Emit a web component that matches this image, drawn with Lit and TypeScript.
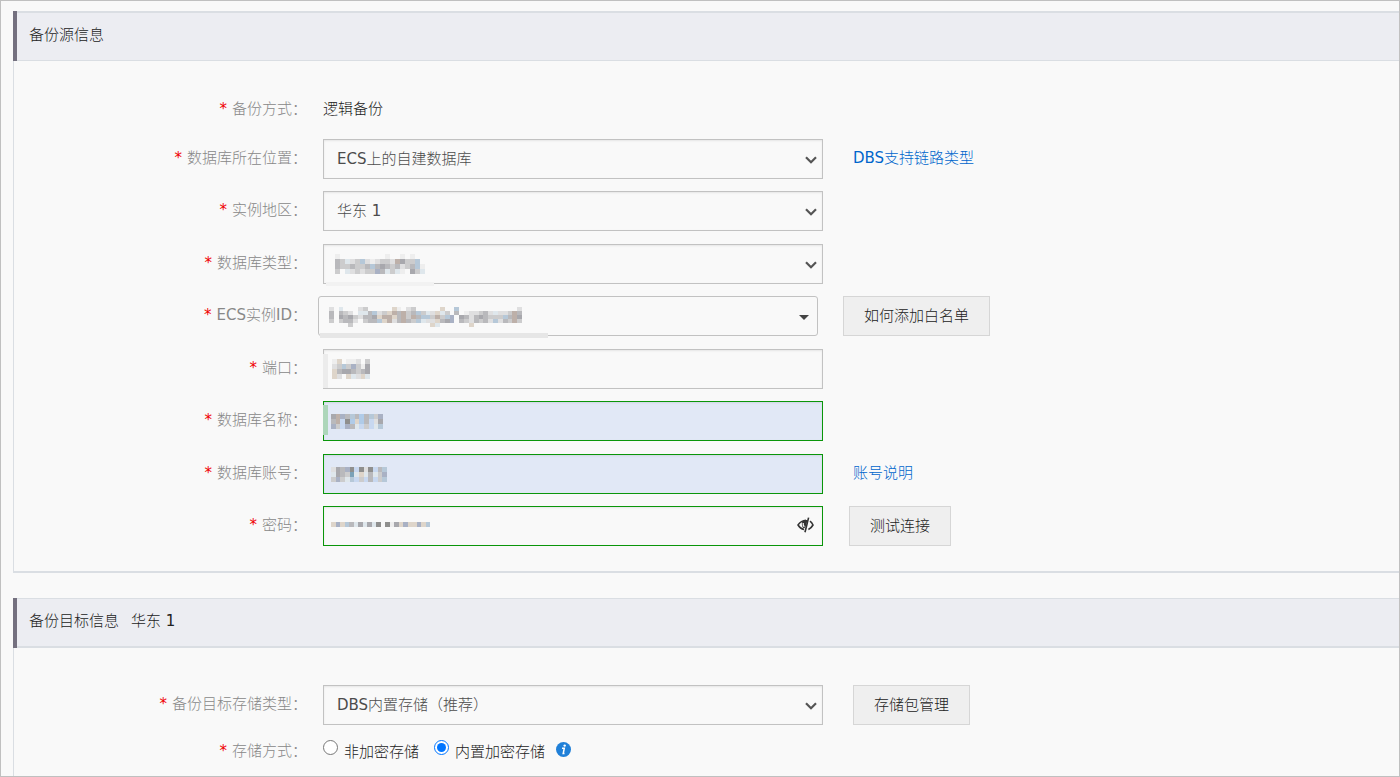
import { LitElement, html, svg, css, nothing } from "lit";
import { customElement, property } from "lit/decorators.js";

/* Colour key for the censored values: one letter per block, a dot for none. */
const PALETTE: Record<string, string> = {
  a: "#eeeeee",
  b: "#dfdfe0",
  c: "#cccccd",
  d: "#b9b9bc",
  e: "#a8a8ad",
  f: "#8f8f8e",
  g: "#dfe7ec",
  h: "#b6c8d8",
  i: "#ded5ca",
  j: "#bdb0a9",
  k: "#c8d8f0",
  l: "#a9b1c4",
  m: "#b0cbe8",
  n: "#7ba2b8",
};

interface Mask {
  rows: string[];
  width: number;
  height: number;
}

const MASKS: Record<string, Mask> = {
  engine: {
    width: 90,
    height: 20,
    rows: ["a.........a..a.a..", "dcgbchbabccbjecch.", "dccdccdhdedcdbcdha", "c.gbcbccldgcga.ecg"],
  },
  instance: {
    width: 193,
    height: 20,
    rows: [
      "b.g...bc.....ia.bc.....i..h............b",
      "d.dcb.ggdhbcijdjcdhcgbigc.d.abbcdbgbbcjd",
      "d.edecbddeijjidjcjdhhcjchl.edbdedccchdje",
      "c.cddb.cddhijbdjdchgbbidel.dcbdcdbhbdcjc",
      "....c................ig......i..........",
    ],
  },
  port: { width: 38, height: 20, rows: ["ai.aab.c", "bchclcae", "ideedcde", "ib.igbig"] },
  dbname: { width: 52, height: 15, rows: ["ejldhdmdhcl", "djkfmimdkbe", "lckldgkckgh"] },
  account: { width: 56, height: 15, rows: ["bedlfkfbfkdh", "gedcngigdgcl", "clcghkckdkch"] },
  secret: { width: 99, height: 5, rows: ["ilihdgegegf.faeiliilih"] },
};

@customElement("masked-value")
export class MaskedValue extends LitElement {
  @property() name = "";

  static styles = css`
    :host {
      display: block;
      line-height: 0;
    }
    .blocks {
      display: block;
      shape-rendering: crispEdges;
    }
  `;

  render() {
    const mask = MASKS[this.name];
    if (!mask) return nothing;
    const columns = mask.rows[0].length;
    return html`<svg
      class="blocks"
      width=${mask.width}
      height=${mask.height}
      viewBox="0 0 ${columns} ${mask.rows.length}"
      preserveAspectRatio="none"
      aria-hidden="true"
    >
      ${mask.rows.map((row, y) =>
        [...row].map((key, x) =>
          key === "." ? nothing : svg`<rect x=${x} y=${y} width="1" height="1" fill=${PALETTE[key]}></rect>`
        )
      )}
    </svg>`;
  }
}

const chevron = html`<svg class="chevron" width="12" height="8" viewBox="0 0 12 8" aria-hidden="true">
  <path d="M1 1.2 6 6.2 11 1.2" fill="none" stroke="#555" stroke-width="2.2" />
</svg>`;

const caret = html`<svg class="chevron caret" width="10" height="5" viewBox="0 0 10 5" aria-hidden="true">
  <path d="M0 0H10L5 5Z" fill="#444" />
</svg>`;

const eye = html`<svg width="17" height="16" viewBox="0 0 17 16" aria-hidden="true">
  <path d="M7 12.600C4.400 12 2.300 10.200 1 8C3 5 5.400 3.400 9 3.200" fill="none" stroke="#333" stroke-width="1.500" />
  <path d="M5.400 4.400C7 3.300 9 3 10.600 3L9 8.500C8.400 10.500 7.600 11.200 7 11.200C5 10.400 4.200 7 5.400 4.400Z" fill="#333" />
  <path d="M6.200 6C5.900 8 6.500 9.200 7.400 9.800" fill="none" stroke="#f8f8f8" stroke-width="1.300" />
  <path d="M11.600 .6 8 15.200" stroke="#333" stroke-width="1.600" />
  <path d="M13 4.200C14.400 5.200 15.300 6.500 16 8C15 9.800 13.600 11.500 11.400 12.500" fill="none" stroke="#333" stroke-width="1.600" />
</svg>`;

const info = html`<svg class="info" width="15" height="15" viewBox="0 0 15 15" aria-hidden="true">
  <circle cx="7.5" cy="7.500" r="7.500" fill="#2080d8" />
  <circle cx="8.700" cy="3.600" r="1.200" fill="#fff" />
  <path d="M6 6.200H8.300L7.200 11.600H8.500" fill="none" stroke="#fff" stroke-width="1.500" />
</svg>`;

@customElement("app-root")
export class AppRoot extends LitElement {
  static styles = css`
    :host {
      display: flex;
      flex-direction: column;
      gap: 25px;
      box-sizing: border-box;
      min-height: 100vh;
      padding: 10px 0 0 12px;
      border: 1px solid #c0c0c0;
      background: #f9f9f9;
      color: #222;
      font-family: "DejaVu Sans", "Noto Sans CJK SC Light", "Noto Sans CJK SC", sans-serif;
      font-size: 15px;
      font-weight: 400;
      line-height: 20px;
    }
    * {
      box-sizing: border-box;
    }
    .panel {
      display: flex;
      flex-direction: column;
    }
    .panel-last {
      flex: 1;
    }
    .bar {
      border-left: 4px solid #74707f;
    }
    .head {
      display: flex;
      gap: 12px;
      height: 50px;
      margin: 0;
      padding: 12px 12px 0;
      border: solid #dadee3;
      border-width: 2px 0 1px;
      background: #ecedf2;
      font-size: 15px;
      font-weight: 400;
    }
    .panel-last .head {
      border-width: 1px 0 2px;
    }
    .body {
      padding: 38px 0 25px;
      border-left: 1px solid #dadee3;
      border-bottom: 2px solid #dadee3;
    }
    .panel-last .body {
      flex: 1;
      padding: 37px 0 12px;
      border-bottom: 0;
    }
    .row {
      display: grid;
      grid-template-columns: 293px 500px auto;
      justify-content: start;
      align-items: start;
      column-gap: 16px;
      min-height: 40px;
      margin-bottom: 12px;
    }
    .row:nth-child(odd) {
      margin-bottom: 13px;
    }
    .row.plain {
      min-height: 20px;
      margin-bottom: 20px;
    }
    .row:last-child,
    .row.plain:last-child {
      margin-bottom: 0;
    }
    .row.plain .label {
      padding-top: 0;
    }
    .row.plain:last-child .label {
      padding-top: 3px;
    }
    .row.combo {
      column-gap: 11px;
    }
    .label {
      padding-top: 9px;
      color: #888;
      text-align: right;
      white-space: nowrap;
    }
    .star {
      margin-right: 5px;
      color: #f00000;
    }
    .field {
      position: relative;
      height: 40px;
    }
    .control {
      display: block;
      width: 100%;
      height: 40px;
      margin: 0;
      padding: 0 13px;
      border: 1px solid #c2c2c2;
      border-radius: 0;
      outline: 0;
      appearance: none;
      background: #f9f9f9;
      box-shadow: inset 0 1px 2px rgba(0, 0, 0, 0.08);
      color: #4c4c4c;
      font: inherit;
    }
    .combo .control {
      border-radius: 3px;
      box-shadow: none;
    }
    .valid {
      border-color: #0a960a;
    }
    .filled {
      background: #e1e8f6;
    }
    .chevron {
      position: absolute;
      top: 17px;
      right: 6px;
      pointer-events: none;
    }
    .caret {
      top: 19px;
      right: 9px;
    }
    .mask {
      position: absolute;
      top: 10px;
      left: 12px;
      pointer-events: none;
    }
    .mask.wide {
      top: 11px;
      left: 11px;
    }
    .mask.typed {
      left: 9px;
    }
    .mask.short {
      top: 13px;
      left: 8px;
    }
    .mask.dots {
      top: 16px;
      left: 8px;
    }
    .smear {
      position: absolute;
      pointer-events: none;
      background: #e6e6e6;
    }
    .smear.engine {
      top: 38px;
      left: 3px;
      width: 108px;
      height: 4px;
      background: #f2f2f2;
    }
    .smear.instance {
      top: 37px;
      left: 2px;
      width: 228px;
      height: 5px;
    }
    .smear.port {
      top: 5px;
      left: 0;
      width: 5px;
      height: 34px;
      background: #ececec;
    }
    .smear.dbname {
      top: 4px;
      left: 0;
      width: 5px;
      height: 30px;
      background: #add6ba;
    }
    .eye {
      position: absolute;
      top: 11px;
      right: 9px;
      display: block;
      height: 16px;
      padding: 0;
      border: 0;
      background: none;
    }
    .side {
      margin-left: 14px;
    }
    .side.near {
      margin-left: 10px;
    }
    .link {
      display: block;
      padding-top: 9px;
      color: #0066cc;
      text-decoration: none;
    }
    .button {
      display: block;
      height: 40px;
      margin: 0;
      padding: 0 20px;
      border: 1px solid #d6d6d6;
      background: #efefef;
      color: #222;
      font: inherit;
      white-space: nowrap;
    }
    .options {
      display: flex;
      align-items: flex-start;
      gap: 15px;
      padding-top: 2px;
    }
    .option {
      display: flex;
      gap: 6px;
    }
    .option-text {
      padding-top: 2px;
    }
    .radio {
      width: 15px;
      height: 15px;
      margin: 0;
    }
    .info {
      margin: 2px 0 0 -4px;
    }
  `;

  private label(text: string, id: string) {
    return html`<label class="label" for=${id}><span class="star">*</span>${text}：</label>`;
  }

  private select(id: string, value: string, extra: unknown = nothing) {
    return html`<div class="field">
      <select class="control" id=${id}>
        <option>${value}</option>
      </select>
      ${chevron}${extra}
    </div>`;
  }

  render() {
    return html`
      <section class="panel">
        <div class="bar"><h2 class="head">备份源信息</h2></div>
        <div class="body">
          <div class="row plain">
            <span class="label"><span class="star">*</span>备份方式：</span>
            <span>逻辑备份</span>
          </div>
          <div class="row">
            ${this.label("数据库所在位置", "location")} ${this.select("location", "ECS上的自建数据库")}
            <a class="side link" href="#">DBS支持链路类型</a>
          </div>
          <div class="row">${this.label("实例地区", "region")} ${this.select("region", "华东 1")}</div>
          <div class="row">
            ${this.label("数据库类型", "engine")}
            ${this.select(
              "engine",
              "",
              html`<span class="smear engine"></span><masked-value class="mask" name="engine"></masked-value>`
            )}
          </div>
          <div class="row combo">
            ${this.label("ECS实例ID", "instance")}
            <div class="field">
              <select class="control" id="instance"></select>
              ${caret}
              <span class="smear instance"></span>
              <masked-value class="mask wide" name="instance"></masked-value>
            </div>
            <div class="side"><button class="button" type="button">如何添加白名单</button></div>
          </div>
          <div class="row">
            ${this.label("端口", "port")}
            <div class="field">
              <input class="control" id="port" type="text" />
              <span class="smear port"></span>
              <masked-value class="mask typed" name="port"></masked-value>
            </div>
          </div>
          <div class="row">
            ${this.label("数据库名称", "dbname")}
            <div class="field">
              <input class="control valid filled" id="dbname" type="text" />
              <span class="smear dbname"></span>
              <masked-value class="mask short" name="dbname"></masked-value>
            </div>
          </div>
          <div class="row">
            ${this.label("数据库账号", "account")}
            <div class="field">
              <input class="control valid filled" id="account" type="text" />
              <masked-value class="mask short" name="account"></masked-value>
            </div>
            <a class="side link" href="#">账号说明</a>
          </div>
          <div class="row">
            ${this.label("密码", "secret")}
            <div class="field">
              <input class="control valid" id="secret" type="password" />
              <masked-value class="mask dots" name="secret"></masked-value>
              <button class="eye" type="button">${eye}</button>
            </div>
            <div class="side near"><button class="button" type="button">测试连接</button></div>
          </div>
        </div>
      </section>
      <section class="panel panel-last">
        <div class="bar"><h2 class="head"><span>备份目标信息</span><span>华东 1</span></h2></div>
        <div class="body">
          <div class="row">
            ${this.label("备份目标存储类型", "storage")} ${this.select("storage", "DBS内置存储（推荐）")}
            <div class="side"><button class="button" type="button">存储包管理</button></div>
          </div>
          <div class="row plain">
            <span class="label"><span class="star">*</span>存储方式：</span>
            <div class="options">
              <label class="option">
                <input class="radio" type="radio" name="mode" />
                <span class="option-text">非加密存储</span>
              </label>
              <label class="option">
                <input class="radio" type="radio" name="mode" checked />
                <span class="option-text">内置加密存储</span>
              </label>
              ${info}
            </div>
          </div>
        </div>
      </section>
    `;
  }
}
